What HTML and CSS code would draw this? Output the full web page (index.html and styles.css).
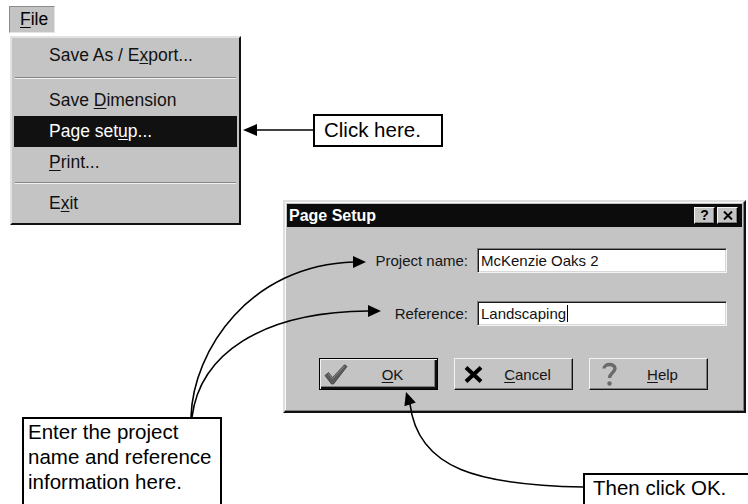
FILE: index.html
```html
<!DOCTYPE html>
<html lang="en">
<head>
<meta charset="utf-8">
<title>Page Setup</title>
<link rel="stylesheet" href="styles.css">
</head>
<body>
<div class="canvas">
  <div class="menu-area">
    <div class="menubar"><span class="menu-title"><u>F</u>ile</span></div>
    <div class="dropdown">
      <div class="item">Save As / E<u>x</u>port...</div>
      <div class="sep"></div>
      <div class="item">Save <u>D</u>imension</div>
      <div class="item active">Page set<u>u</u>p...</div>
      <div class="item"><u>P</u>rint...</div>
      <div class="sep sep-short"></div>
      <div class="item">E<u>x</u>it</div>
    </div>
  </div>

  <div class="callout callout-click">Click here.</div>

  <div class="dialog">
    <div class="titlebar">
      <span class="title">Page Setup</span>
      <div class="title-btns">
        <span class="tbtn tbtn-help">?</span>
        <span class="tbtn">
          <svg width="10" height="9" viewBox="0 0 10 9"><path d="M1 0.5 L9 8.5 M9 0.5 L1 8.5" stroke="#000" stroke-width="2" fill="none"/></svg>
        </span>
      </div>
    </div>
    <div class="dialog-body">
      <div class="form">
        <span class="label">Project name:</span>
        <div class="input">McKenzie Oaks 2</div>
        <span class="label">Reference:</span>
        <div class="input">Landscaping<span class="caret"></span></div>
      </div>
      <div class="buttons">
        <div class="btn btn-default">
          <span class="btn-icon">
            <svg width="24" height="21" viewBox="0 0 24 21"><path d="M1 11.5 L4.5 8.5 L8.5 13.5 L20.5 0.8 L23 2.5 L9.5 20 L7.5 20 Z" fill="#5c5c5c" stroke="#3a3a3a" stroke-width="0.8"/><path d="M4.5 9.5 L8.5 14.5 L20.5 2" stroke="#8a8a8a" stroke-width="1" fill="none"/></svg>
          </span>
          <span class="btn-label"><u>O</u>K</span>
        </div>
        <div class="btn">
          <span class="btn-icon">
            <svg width="19" height="17" viewBox="0 0 19 17"><path d="M2 1.5 L17 15.5 M17 1.5 L2 15.5" stroke="#000" stroke-width="4" fill="none"/></svg>
          </span>
          <span class="btn-label"><u>C</u>ancel</span>
        </div>
        <div class="btn">
          <span class="btn-icon">
            <svg width="18" height="26" viewBox="0 0 18 26"><path d="M4 7.5 C4 2.5 15 2 15 7.5 C15 11.5 9.5 12 9.5 17" stroke="#6a6a6a" stroke-width="3.4" fill="none"/><circle cx="9.5" cy="22.5" r="2.2" fill="#6a6a6a"/></svg>
          </span>
          <span class="btn-label"><u>H</u>elp</span>
        </div>
      </div>
    </div>
  </div>

  <div class="callout callout-enter">Enter the project<br>name and reference<br>information here.</div>
  <div class="callout callout-then">Then click OK.</div>

  <svg class="arrows" width="748" height="504" viewBox="0 0 748 504">
    <g stroke="#000" stroke-width="1.6" fill="none">
      <path d="M256 130 L313 130"/>
      <path d="M191 417 C193 350 250 265 354 262"/>
      <path d="M192 417 C200 355 260 312 368 311"/>
      <path d="M583 487 C480 485 418 470 410 404"/>
    </g>
    <g fill="#000">
      <polygon points="243,130 257,124 257,136"/>
      <polygon points="366,262 353,256 353,268"/>
      <polygon points="381,311 368,305 368,317"/>
      <polygon points="406,392 415.8,402.4 404.4,406.2"/>
    </g>
  </svg>
</div>
</body>
</html>
```

FILE: styles.css
```css
* { box-sizing: border-box; }

html, body {
  margin: 0;
  padding: 0;
  background: #fff;
}

body {
  font-family: "Liberation Sans", Arial, sans-serif;
  color: #000;
}

.canvas {
  position: relative;
  width: 748px;
  height: 504px;
  overflow: hidden;
  background: #fff;
}

u {
  text-decoration: underline;
  text-decoration-thickness: 1px;
  text-underline-offset: 2px;
}

/* ---------- Menu ---------- */
.menu-area {
  position: absolute;
  left: 9px;
  top: 6px;
  display: flex;
  flex-direction: column;
  align-items: flex-start;
}

.menubar {
  display: flex;
}

.menu-title {
  display: block;
  width: 46px;
  height: 27px;
  background: #c4c4c4;
  border-top: 1px solid #8c8c8c;
  border-left: 1px solid #8c8c8c;
  border-right: 1px solid #e4e4e4;
  border-bottom: 1px solid #e4e4e4;
  font-size: 17.5px;
  line-height: 25px;
  padding-left: 10px;
}

.dropdown {
  margin-top: 3px;
  margin-left: 1px;
  width: 231px;
  background: #c4c4c4;
  border-style: solid;
  border-width: 2px;
  border-color: #e2e2e2 #111 #111 #e2e2e2;
  padding: 2px 2px 4px 2px;
}

.item {
  height: 31px;
  line-height: 31px;
  padding-left: 35px;
  font-size: 17.5px;
  color: #111;
  white-space: nowrap;
}

.item.active {
  background: #111;
  color: #fff;
}

.sep {
  height: 2px;
  margin: 6px 1px;
  border-top: 1px solid #858585;
  border-bottom: 1px solid #f2f2f2;
}

.sep.sep-short {
  margin: 4px 1px;
}

/* ---------- Callouts ---------- */
.callout {
  position: absolute;
  background: #fff;
  border: 2px solid #000;
  font-size: 20.5px;
  white-space: nowrap;
}

.callout-click {
  left: 313px;
  top: 114px;
  width: 130px;
  height: 33px;
  line-height: 28px;
  padding-left: 9px;
}

.callout-enter {
  left: 22px;
  top: 417px;
  width: 200px;
  height: 100px;
  line-height: 25px;
  padding-left: 4px;
}

.callout-then {
  left: 583px;
  top: 473px;
  width: 180px;
  height: 40px;
  line-height: 26px;
  padding-left: 8px;
}

/* ---------- Dialog ---------- */
.dialog {
  position: absolute;
  left: 283px;
  top: 200px;
  width: 463px;
  height: 213px;
  background: #c4c4c4;
  border-style: solid;
  border-width: 2px;
  border-color: #dedede #111 #111 #dedede;
  box-shadow: inset -1px -1px 0 #7e7e7e, inset 1px 1px 0 #fafafa;
  padding: 2px;
  display: flex;
  flex-direction: column;
}

.titlebar {
  height: 23px;
  background: #0c0c0c;
  display: flex;
  align-items: center;
  justify-content: space-between;
  padding: 0 4px 0 2px;
}

.title {
  color: #fff;
  font-weight: bold;
  font-size: 16px;
  line-height: 23px;
}

.title-btns {
  display: flex;
  gap: 2px;
}

.tbtn {
  width: 21px;
  height: 17px;
  background: #c4c4c4;
  border-style: solid;
  border-width: 1px;
  border-color: #f4f4f4 #000 #000 #f4f4f4;
  box-shadow: inset -1px -1px 0 #808080;
  display: flex;
  align-items: center;
  justify-content: center;
  font-weight: bold;
  font-size: 14px;
  line-height: 15px;
}

.dialog-body {
  padding: 21px 15px 0 0;
  display: flex;
  flex-direction: column;
}

.form {
  display: grid;
  grid-template-columns: 181px 250px;
  column-gap: 9px;
  row-gap: 28px;
}

.label {
  text-align: right;
  font-size: 15px;
  line-height: 25px;
  color: #151515;
}

.input {
  height: 25px;
  background: #fff;
  border-style: solid;
  border-width: 1px;
  border-color: #7c7c7c #f4f4f4 #f4f4f4 #7c7c7c;
  box-shadow: inset 1px 1px 0 #1a1a1a, inset -1px -1px 0 #d8d8d8;
  padding-left: 3px;
  font-size: 15px;
  line-height: 22px;
  display: flex;
  align-items: center;
  color: #111;
}

.caret {
  display: inline-block;
  width: 0;
  height: 17px;
  border-left: 1px solid #000;
  margin-left: 1px;
}

.buttons {
  margin-top: 32px;
  padding-left: 32px;
  display: flex;
  gap: 16px;
}

.btn {
  width: 119px;
  height: 32px;
  background: #c4c4c4;
  border-style: solid;
  border-width: 1px;
  border-color: #f2f2f2 #111 #111 #f2f2f2;
  box-shadow: inset -1px -1px 0 #7e7e7e;
  display: flex;
  align-items: center;
  font-size: 15px;
  color: #151515;
}

.btn-default {
  border: 1px solid #000;
  box-shadow: inset 1px 1px 0 #f2f2f2, inset -2px -2px 0 #111, inset -3px -3px 0 #7e7e7e;
}

.btn-icon {
  width: 28px;
  flex: none;
  display: flex;
  align-items: center;
  justify-content: flex-end;
}

.btn-default .btn-icon {
  width: 28px;
}

.btn-label {
  flex: 1;
  text-align: center;
}

/* ---------- Arrows overlay ---------- */
.arrows {
  position: absolute;
  left: 0;
  top: 0;
  pointer-events: none;
}
```
